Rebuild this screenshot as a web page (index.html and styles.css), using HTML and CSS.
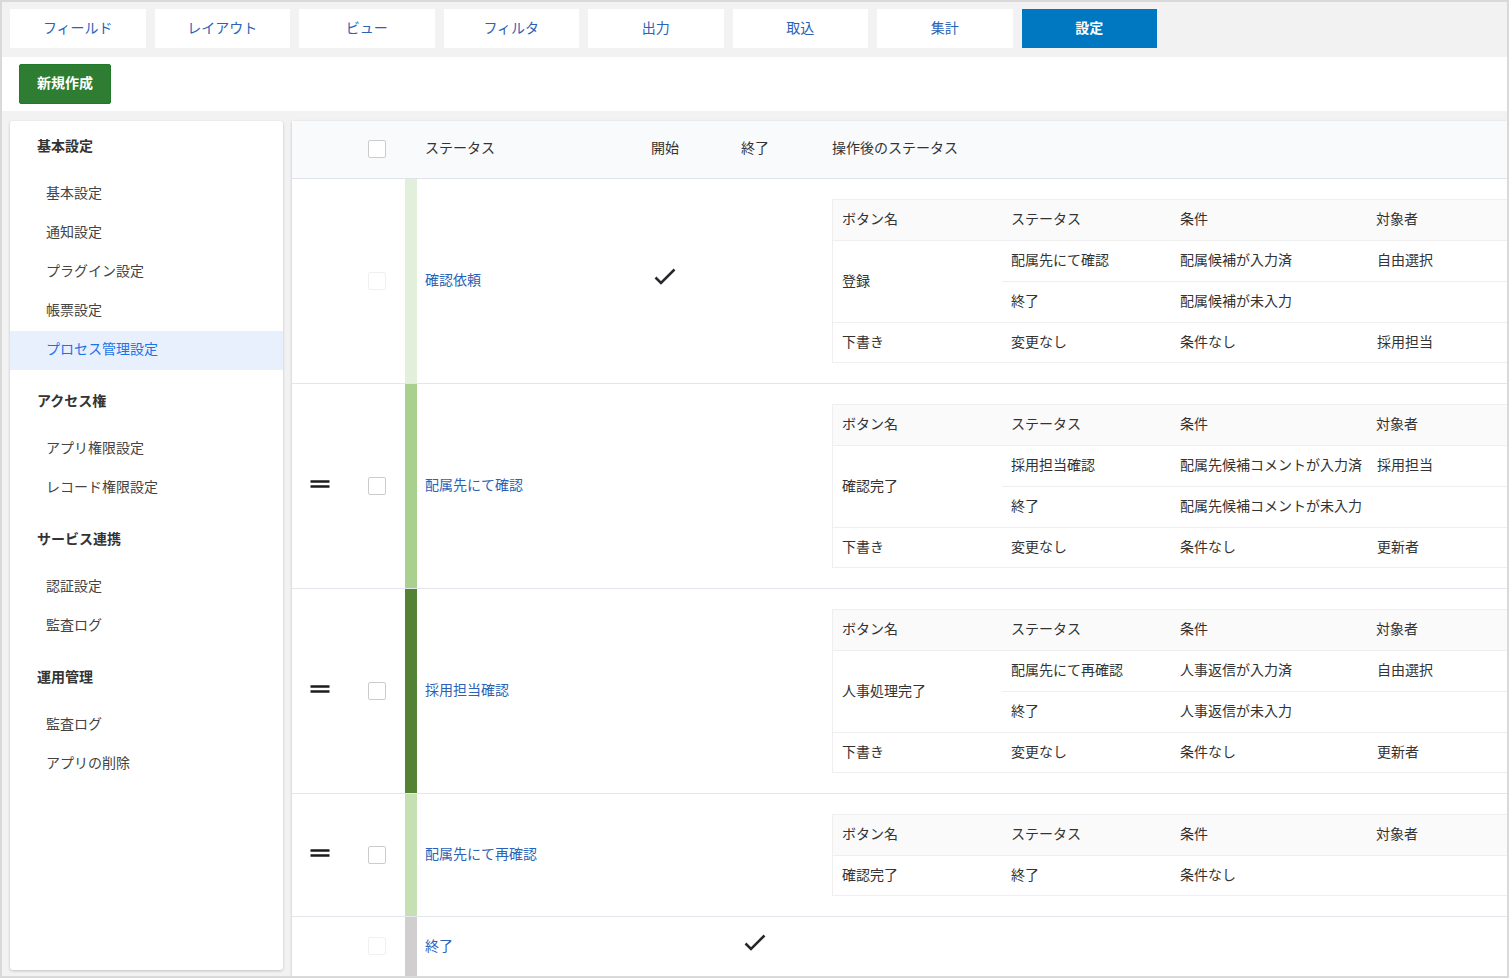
FILE: index.html
```html
<!DOCTYPE html>
<html lang="ja">
<head>
  <meta charset="UTF-8" />
  <meta name="viewport" content="width=device-width, initial-scale=1" />
  <title>プロセス管理設定</title>
  <link rel="stylesheet" href="styles.css">
</head>
<body>

  <svg class="sprite" aria-hidden="true">
    <symbol id="icon-check" viewBox="0 0 24 24">
      <path d="M2.5 10.5 L8 16 L21.5 2.5" fill="none" stroke="#26282b" stroke-width="2.5" />
    </symbol>
    <symbol id="icon-drag" viewBox="0 0 20 14">
      <path d="M0.5 2.5 H19.5 M0.5 7.5 H19.5" fill="none" stroke="#1c1c1f" stroke-width="2.4" />
    </symbol>
  </svg>

  <nav class="tabs" aria-label="アプリ設定">
    <a class="tab" href="#">フィールド</a>
    <a class="tab" href="#">レイアウト</a>
    <a class="tab" href="#">ビュー</a>
    <a class="tab" href="#">フィルタ</a>
    <a class="tab" href="#">出力</a>
    <a class="tab" href="#">取込</a>
    <a class="tab" href="#">集計</a>
    <a class="tab active" href="#" aria-current="page">設定</a>
  </nav>

  <div class="toolbar">
    <button class="btn-new" type="button">新規作成</button>
  </div>

  <main class="content">
    <aside class="sidebar">
      <section class="menu-group">
        <h2>基本設定</h2>
        <ul>
          <li><a href="#">基本設定</a></li>
          <li><a href="#">通知設定</a></li>
          <li><a href="#">プラグイン設定</a></li>
          <li><a href="#">帳票設定</a></li>
          <li><a class="current" href="#" aria-current="page">プロセス管理設定</a></li>
        </ul>
      </section>
      <section class="menu-group">
        <h2>アクセス権</h2>
        <ul>
          <li><a href="#">アプリ権限設定</a></li>
          <li><a href="#">レコード権限設定</a></li>
        </ul>
      </section>
      <section class="menu-group">
        <h2>サービス連携</h2>
        <ul>
          <li><a href="#">認証設定</a></li>
          <li><a href="#">監査ログ</a></li>
        </ul>
      </section>
      <section class="menu-group">
        <h2>運用管理</h2>
        <ul>
          <li><a href="#">監査ログ</a></li>
          <li><a href="#">アプリの削除</a></li>
        </ul>
      </section>
    </aside>

    <div class="panel">
      <table class="status-table">
        <colgroup>
          <col class="col-drag">
          <col class="col-select">
          <col class="col-color">
          <col class="col-name">
          <col class="col-flag">
          <col class="col-flag">
          <col>
        </colgroup>
        <thead>
          <tr>
            <th></th>
            <th class="center"><input type="checkbox" aria-label="すべて選択"></th>
            <th></th>
            <th>ステータス</th>
            <th class="center">開始</th>
            <th class="center">終了</th>
            <th class="actions">操作後のステータス</th>
          </tr>
        </thead>
        <tbody>
          <tr>
            <td></td>
            <td class="center"><input type="checkbox" aria-label="確認依頼を選択" disabled></td>
            <td class="color color-request"></td>
            <td class="name"><a href="#">確認依頼</a></td>
            <td class="center"><svg class="icon-check" role="img" aria-label="開始"><use href="#icon-check" /></svg></td>
            <td></td>
            <td class="actions">
              <table class="action-table">
                <colgroup><col class="col-button"><col class="col-next"><col class="col-cond"><col></colgroup>
                <thead>
                  <tr><th>ボタン名</th><th>ステータス</th><th>条件</th><th>対象者</th></tr>
                </thead>
                <tbody>
                  <tr><td rowspan="2">登録</td><td>配属先にて確認</td><td>配属候補が入力済</td><td>自由選択</td></tr>
                  <tr><td>終了</td><td>配属候補が未入力</td><td></td></tr>
                  <tr><td>下書き</td><td>変更なし</td><td>条件なし</td><td>採用担当</td></tr>
                </tbody>
              </table>
            </td>
          </tr>
          <tr>
            <td class="center"><svg class="icon-drag" role="img" aria-label="並べ替え"><use href="#icon-drag" /></svg></td>
            <td class="center"><input type="checkbox" aria-label="配属先にて確認を選択"></td>
            <td class="color color-assign"></td>
            <td class="name"><a href="#">配属先にて確認</a></td>
            <td></td>
            <td></td>
            <td class="actions">
              <table class="action-table">
                <colgroup><col class="col-button"><col class="col-next"><col class="col-cond"><col></colgroup>
                <thead>
                  <tr><th>ボタン名</th><th>ステータス</th><th>条件</th><th>対象者</th></tr>
                </thead>
                <tbody>
                  <tr><td rowspan="2">確認完了</td><td>採用担当確認</td><td>配属先候補コメントが入力済</td><td>採用担当</td></tr>
                  <tr><td>終了</td><td>配属先候補コメントが未入力</td><td></td></tr>
                  <tr><td>下書き</td><td>変更なし</td><td>条件なし</td><td>更新者</td></tr>
                </tbody>
              </table>
            </td>
          </tr>
          <tr>
            <td class="center"><svg class="icon-drag" role="img" aria-label="並べ替え"><use href="#icon-drag" /></svg></td>
            <td class="center"><input type="checkbox" aria-label="採用担当確認を選択"></td>
            <td class="color color-hr"></td>
            <td class="name"><a href="#">採用担当確認</a></td>
            <td></td>
            <td></td>
            <td class="actions">
              <table class="action-table">
                <colgroup><col class="col-button"><col class="col-next"><col class="col-cond"><col></colgroup>
                <thead>
                  <tr><th>ボタン名</th><th>ステータス</th><th>条件</th><th>対象者</th></tr>
                </thead>
                <tbody>
                  <tr><td rowspan="2">人事処理完了</td><td>配属先にて再確認</td><td>人事返信が入力済</td><td>自由選択</td></tr>
                  <tr><td>終了</td><td>人事返信が未入力</td><td></td></tr>
                  <tr><td>下書き</td><td>変更なし</td><td>条件なし</td><td>更新者</td></tr>
                </tbody>
              </table>
            </td>
          </tr>
          <tr>
            <td class="center"><svg class="icon-drag" role="img" aria-label="並べ替え"><use href="#icon-drag" /></svg></td>
            <td class="center"><input type="checkbox" aria-label="配属先にて再確認を選択"></td>
            <td class="color color-recheck"></td>
            <td class="name"><a href="#">配属先にて再確認</a></td>
            <td></td>
            <td></td>
            <td class="actions">
              <table class="action-table">
                <colgroup><col class="col-button"><col class="col-next"><col class="col-cond"><col></colgroup>
                <thead>
                  <tr><th>ボタン名</th><th>ステータス</th><th>条件</th><th>対象者</th></tr>
                </thead>
                <tbody>
                  <tr><td>確認完了</td><td>終了</td><td>条件なし</td><td></td></tr>
                </tbody>
              </table>
            </td>
          </tr>
          <tr>
            <td></td>
            <td class="center"><input type="checkbox" aria-label="終了を選択" disabled></td>
            <td class="color color-end"></td>
            <td class="name"><a href="#">終了</a></td>
            <td></td>
            <td class="center"><svg class="icon-check" role="img" aria-label="終了"><use href="#icon-check" /></svg></td>
            <td></td>
          </tr>
        </tbody>
      </table>
    </div>
  </main>

</body>
</html>
```
FILE: styles.css
```css
* {
  box-sizing: border-box;
}
body {
  display: flex;
  flex-direction: column;
  min-height: 100vh;
  margin: 0;
  border: 2px solid #d9d9d9;
  background: #f2f2f2;
  color: #333;
  font-family: "Noto Sans CJK JP", sans-serif;
  font-size: 14px;
  line-height: 20px;
}
a {
  color: #2b62b8;
  text-decoration: none;
}
.sprite {
  display: none;
}

/* tabs */
.tabs {
  display: flex;
  gap: 9px;
  max-width: 1163px;
  padding: 7px 8px 9px;
}
.tab {
  flex: 1;
  padding: 8px 0 11px;
  background: #fff;
  text-align: center;
}
.tab.active {
  background: #0078c1;
  color: #fff;
  font-weight: bold;
}

/* toolbar */
.toolbar {
  padding: 7px 17px;
  background: #fff;
}
.btn-new {
  display: block;
  height: 40px;
  padding: 0 17px 4px;
  border: 1px solid #1f7a2a;
  border-radius: 2px;
  background: #2e7d32;
  color: #fff;
  font-family: inherit;
  font-size: 14px;
  font-weight: bold;
  cursor: pointer;
}

/* sidebar */
.content {
  display: flex;
  flex: 1;
  align-items: stretch;
  gap: 9px;
  padding: 10px 0 0 8px;
}
.sidebar {
  flex: 0 0 273px;
  margin-bottom: 6px;
  padding: 3px 0;
  border-radius: 3px;
  background: #fff;
  box-shadow: 0 1px 3px rgba(0, 0, 0, 0.2);
}
.menu-group + .menu-group {
  margin-top: 9px;
}
.menu-group h2 {
  margin: 0 0 9px;
  padding-left: 27px;
  font-size: 14px;
  line-height: 42px;
}
.menu-group ul {
  margin: 0;
  padding: 0;
  list-style: none;
}
.menu-group li a {
  display: block;
  padding: 0 0 4px 36px;
  color: #444;
  line-height: 35px;
}
.menu-group li a.current {
  background: #e8f0fe;
  color: #1a73e8;
}

/* status table */
.panel {
  flex: 1;
  min-width: 0;
  background: #fff;
  box-shadow: 0 1px 3px rgba(0, 0, 0, 0.2);
}
table {
  width: 100%;
  border-collapse: separate;
  border-spacing: 0;
  table-layout: fixed;
}
th,
td {
  padding: 0;
  font-weight: normal;
  text-align: left;
  vertical-align: middle;
}
.col-drag {
  width: 56px;
}
.col-select {
  width: 57px;
}
.col-color {
  width: 12px;
}
.col-name {
  width: 203px;
}
.col-flag {
  width: 90px;
}
.status-table > thead > tr > th {
  height: 58px;
  padding-bottom: 5px;
  border-bottom: 1px solid #e0e4ea;
  background: #f9fafc;
}
.status-table > tbody > tr > td {
  height: 59px;
  padding-bottom: 4px;
  border-bottom: 1px solid #e3e6ea;
}
.status-table > tbody > tr:last-child > td {
  border-bottom: none;
}
.status-table .center {
  text-align: center;
}
.status-table th:nth-child(4),
.status-table .name {
  padding-left: 8px;
}
.status-table th.actions {
  padding-left: 32px;
}
.status-table > tbody > tr > td.actions {
  padding: 20px 0 20px 32px;
}
.color-request {
  background: #e2efda;
}
.color-assign {
  background: #a9d08e;
}
.color-hr {
  background: #548235;
}
.color-recheck {
  background: #c6e0b4;
}
.color-end {
  background: #d0cece;
}
input[type="checkbox"] {
  appearance: none;
  display: inline-block;
  width: 18px;
  height: 18px;
  margin: 0;
  border: 1px solid #ccc;
  border-radius: 2px;
  background: #fff;
  vertical-align: middle;
}
input[type="checkbox"]:disabled {
  border-color: #f0f0f0;
}
.icon-check {
  width: 24px;
  height: 24px;
  vertical-align: middle;
}
.icon-drag {
  width: 20px;
  height: 14px;
  vertical-align: middle;
}

/* buttons of each status */
.action-table {
  border-top: 1px solid #efefef;
  border-left: 1px solid #efefef;
}
.col-button {
  width: 169px;
}
.col-next {
  width: 169px;
}
.col-cond {
  width: 197px;
}
.action-table th,
.action-table td {
  height: 41px;
  padding: 0 0 4px 9px;
  border-bottom: 1px solid #efefef;
  white-space: nowrap;
}
.action-table tbody tr:last-child td {
  height: 40px;
}
.action-table th {
  background: #fafafa;
}
```
